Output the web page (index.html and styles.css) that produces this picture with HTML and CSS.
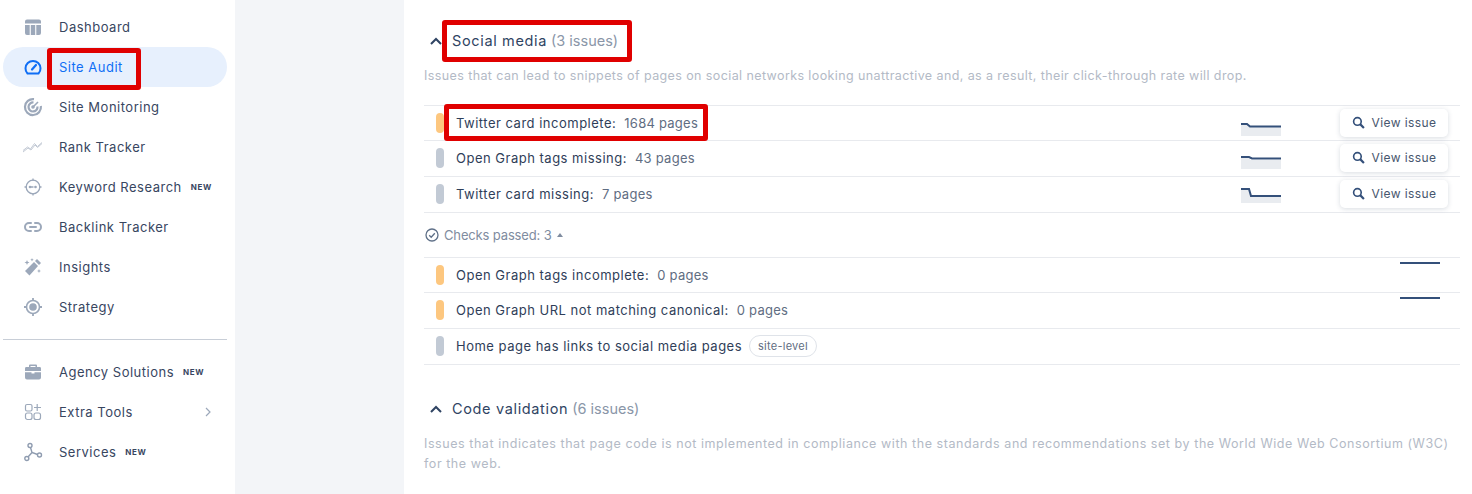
FILE: index.html
```html
<!DOCTYPE html>
<html lang="en">
<head>
<meta charset="utf-8">
<title>Site Audit</title>
<link rel="stylesheet" href="styles.css">
</head>
<body>
<div class="app">
  <nav class="sidebar">
    <a class="nav-item"><svg class="ico" viewBox="0 0 18 18"><path fill="#9ca8ba" d="M1 3.500A2 2 0 0 1 3 1.500h12a2 2 0 0 1 2 2V5.500H1zM1 7h4.700v10H3a2 2 0 0 1-2-2zM6.800 7h4.400v10H6.800zM12.300 7H17v8a2 2 0 0 1-2 2h-2.700z"/></svg><span>Dashboard</span></a>
    <a class="nav-item active"><svg class="ico" viewBox="0 0 18 18"><path fill="none" stroke="#0f6ef5" stroke-width="2" stroke-linejoin="round" d="M3.500 15.500A7.500 7.500 0 1 1 14.500 15.500z"/><path fill="none" stroke="#0f6ef5" stroke-width="2.200" stroke-linecap="round" d="M8 11.500l4-4.500"/></svg><span>Site Audit</span></a>
    <a class="nav-item"><svg class="ico" viewBox="0 0 18 18"><g fill="none" stroke="#9ca8ba"><path stroke-width="2.200" d="M10 1.100A8 8 0 1 0 16.900 8"/><path stroke-width="2.200" d="M9.500 4.500a4.500 4.500 0 1 0 4 4"/><circle cx="9" cy="9" r="1" stroke-width="1.600"/><path stroke-width="1.600" d="M9 9l5-5"/></g></svg><span>Site Monitoring</span></a>
    <a class="nav-item"><svg class="ico" viewBox="0 0 18 18"><path fill="none" stroke="#c3cad5" stroke-width="1" d="M-1 14l5-4 3 2 4-5 2.500 2.500L18 5.500M-1 12.500l4.500-3.500 3 2 4-5.500 3 3 4.500-4"/></svg><span>Rank Tracker</span></a>
    <a class="nav-item"><svg class="ico" viewBox="0 0 18 18"><circle cx="9" cy="9" r="6.800" fill="none" stroke="#9ca8ba" stroke-width="1.300"/><path stroke="#9ca8ba" stroke-width="1.300" d="M9 .5v2.500M9 15v2.500M.5 9H3M15 9h2.500M5.500 9h4"/><circle cx="6" cy="9" r="1.300" fill="#9ca8ba"/><circle cx="11.500" cy="9" r="1.300" fill="#9ca8ba"/></svg><span>Keyword Research</span><b class="new">NEW</b></a>
    <a class="nav-item"><svg class="ico" viewBox="0 0 18 18"><path fill="none" stroke="#9ca8ba" stroke-width="2" stroke-linecap="round" d="M7 5H5a4 4 0 0 0 0 8h2M11 5h2a4 4 0 0 1 0 8h-2M6 9h6"/></svg><span>Backlink Tracker</span></a>
    <a class="nav-item"><svg class="ico" viewBox="0 0 18 18"><path fill="#9ca8ba" d="M13 1l4 4-2 2-4-4zM10 4l4 4-8.500 9.500L1 13zM3 2l.7 1.800L5.500 4.500l-1.800.7L3 7l-.7-1.800L.5 4.500l1.800-.7zM15 11l.6 1.400 1.400.6-1.400.6L15 15l-.6-1.400L13 13l1.400-.6zM8 0l.5 1.200L9.700 1.700 8.500 2.200 8 3.400l-.5-1.200-1.200-.5 1.200-.5z"/></svg><span>Insights</span></a>
    <a class="nav-item"><svg class="ico" viewBox="0 0 18 18"><circle cx="9" cy="9" r="6.500" fill="none" stroke="#9ca8ba" stroke-width="1.600"/><circle cx="9" cy="9" r="3.800" fill="#9ca8ba"/><path stroke="#9ca8ba" stroke-width="1.800" d="M9 0v3M9 15v3M0 9h3M15 9h3"/></svg><span>Strategy</span></a>
    <hr class="divider">
    <a class="nav-item"><svg class="ico" viewBox="0 0 18 18"><path fill="#9ca8ba" d="M6 1.500h6a1 1 0 0 1 1 1V4h3a1.500 1.500 0 0 1 1 1.500V8H1V5.500A1.500 1.500 0 0 1 2 4h3V2.500a1 1 0 0 1 1-1zM6.500 3v1h5V3zM1 9.200h6.500v1.300h3V9.200H17v5.300a2 2 0 0 1-2 2H3a2 2 0 0 1-2-2z"/></svg><span>Agency Solutions</span><b class="new">NEW</b></a>
    <a class="nav-item"><svg class="ico" viewBox="0 0 18 18"><g fill="none" stroke="#9ca8ba" stroke-width="1.200"><rect x="1.500" y="1.500" width="6.500" height="6.500" rx="1.500"/><rect x="1.500" y="10" width="6.500" height="6.500" rx="2"/><rect x="10" y="10" width="6.500" height="6.500" rx="2"/><path d="M13.200 1v7M10 4.500h7"/></g></svg><span>Extra Tools</span><svg class="chev" viewBox="0 0 6 10"><path fill="none" stroke="#9ca8ba" stroke-width="1.200" d="M1 1l4 4-4 4"/></svg></a>
    <a class="nav-item"><svg class="ico" viewBox="0 0 18 18"><g fill="none" stroke="#8f9cb0" stroke-width="1.400"><circle cx="6" cy="2.500" r="2"/><circle cx="15.500" cy="12" r="2"/><circle cx="2.800" cy="15.500" r="2"/><path d="M6.500 4.500L8 9.500l5.500 2M8 9.500l-4 4.500"/></g></svg><span>Services</span><b class="new">NEW</b></a>
  </nav>
  <div class="gutter"></div>
  <main class="content">
    <section class="group first">
      <h2 class="title"><svg class="caret" viewBox="0 0 12 8"><path fill="none" stroke="#2f4463" stroke-width="2" d="M1 7l5-5 5 5"/></svg><span class="name">Social media</span> <span class="count">(3 issues)</span><i class="mark mark-title"></i></h2>
      <p class="desc">Issues that can lead to snippets of pages on social networks looking unattractive and, as a result, their click-through rate will drop.</p>
      <ul class="rows">
        <li class="row"><i class="pill amber"></i><span class="label">Twitter card incomplete:</span><span class="num">1684 pages</span><i class="mark mark-row"></i>
          <svg class="spark spark-a" viewBox="0 0 40 13"><path fill="#e9ecf0" d="M0 2h7l3 2h30v9H0z"/><path fill="none" stroke="#34507a" stroke-width="2" d="M0 1h6l3 2.500h31"/></svg>
          <button class="view"><svg viewBox="0 0 12 12"><circle cx="5" cy="5" r="3.500" fill="none" stroke="#34507a" stroke-width="1.500"/><path stroke="#34507a" stroke-width="2" d="M7.500 7.500L11 11"/></svg>View issue</button></li>
        <li class="row"><i class="pill grey"></i><span class="label">Open Graph tags missing:</span><span class="num">43 pages</span>
          <svg class="spark spark-b" viewBox="0 0 40 13"><path fill="#e9ecf0" d="M0 2h7l3 2h30v9H0z"/><path fill="none" stroke="#34507a" stroke-width="2" d="M0 1h8l3 1.500h29"/></svg>
          <button class="view"><svg viewBox="0 0 12 12"><circle cx="5" cy="5" r="3.500" fill="none" stroke="#34507a" stroke-width="1.500"/><path stroke="#34507a" stroke-width="2" d="M7.500 7.500L11 11"/></svg>View issue</button></li>
        <li class="row"><i class="pill grey"></i><span class="label">Twitter card missing:</span><span class="num">7 pages</span>
          <svg class="spark spark-c" viewBox="0 0 40 15"><path fill="#e9ecf0" d="M0 1h8l2 8h30v6H0z"/><path fill="none" stroke="#34507a" stroke-width="2" d="M0 1h8l2 7h30"/></svg>
          <button class="view"><svg viewBox="0 0 12 12"><circle cx="5" cy="5" r="3.500" fill="none" stroke="#34507a" stroke-width="1.500"/><path stroke="#34507a" stroke-width="2" d="M7.500 7.500L11 11"/></svg>View issue</button></li>
      </ul>
      <div class="passed"><svg viewBox="0 0 14 14"><circle cx="7" cy="7" r="6" fill="none" stroke="#5f7088" stroke-width="1.300"/><path fill="none" stroke="#5f7088" stroke-width="1.300" d="M4.200 7.200l2 2 3.600-4"/></svg>Checks passed: 3<svg class="up" viewBox="0 0 6 4"><path fill="#7f8ca0" d="M3 0l3 4H0z"/></svg></div>
      <ul class="rows">
        <li class="row"><i class="pill amber"></i><span class="label">Open Graph tags incomplete:</span><span class="num">0 pages</span><i class="flat"></i></li>
        <li class="row"><i class="pill amber"></i><span class="label">Open Graph URL not matching canonical:</span><span class="num">0 pages</span><i class="flat"></i></li>
        <li class="row"><i class="pill grey"></i><span class="label plain">Home page has links to social media pages</span><span class="tag">site-level</span></li>
      </ul>
    </section>
    <section class="group">
      <h2 class="title"><svg class="caret" viewBox="0 0 12 8"><path fill="none" stroke="#2f4463" stroke-width="2" d="M1 7l5-5 5 5"/></svg><span class="name">Code validation</span> <span class="count">(6 issues)</span></h2>
      <p class="desc desc-wide">Issues that indicates that page code is not implemented in compliance with the standards and recommendations set by the World Wide Web Consortium (W3C) for the web.</p>
    </section>
  </main>
</div>
<i class="mark mark-nav"></i>
</body>
</html>
```
FILE: styles.css
```css
* { box-sizing: border-box; }
html, body { margin: 0; padding: 0; height: 494px; overflow: hidden; background: #fff; }
body { font-family: Inter, "Noto Sans", sans-serif; color: #2b3a55; position: relative; }
.app { display: flex; height: 494px; }
.sidebar { width: 235px; flex: none; padding: 7px 8px 0 3px; }
.nav-item { display: flex; align-items: center; height: 40px; padding-left: 21px; border-radius: 20px; font-size: 13px; letter-spacing: .5px; color: #38465f; }
.nav-item.active { background: #e7f0fd; color: #0f6ef5; }
.ico { width: 18px; height: 18px; flex: none; margin-right: 17px; overflow: visible; }
.new { margin-left: 9px; font-size: 8px; font-weight: 700; letter-spacing: .6px; color: #38465f; }
.chev { width: 6px; height: 10px; margin-left: auto; margin-right: 16px; }
.divider { border: 0; border-top: 1px solid #c8ced7; margin: 12px 0; height: 0; }
.gutter { width: 169px; flex: none; background: #f3f5f8; }
.content { flex: 1; min-width: 0; padding: 0 12px 0 20px; }
.group.first { padding-top: 31px; }
.group + .group { padding-top: 34px; }
.title { position: relative; margin: 0; display: flex; align-items: center; height: 20px; font-size: 14.500px; font-weight: 400; line-height: 20px; }
.caret { width: 12px; height: 8px; margin: 0 10px 0 6px; flex: none; }
.name { color: #2f4463; letter-spacing: .65px; }
.count { margin-left: 4px; color: #8a96a8; letter-spacing: 0; }
.desc { margin: 15px 0 0; font-size: 12.500px; line-height: 20px; color: #b3bac6; letter-spacing: .4px; }
.desc-wide { letter-spacing: .56px; }
.first .desc { margin-bottom: 19px; }
.rows { list-style: none; margin: 0; padding: 0; border-top: 1px solid #e8eaee; }
.row { position: relative; display: flex; align-items: center; height: 36px; padding: 0 0 1px 12px; border-bottom: 1px solid #e8eaee; font-size: 13px; letter-spacing: .25px; }
.row:first-child { height: 35px; padding-bottom: 0; }
.pill { width: 8px; height: 20px; border-radius: 4px; flex: none; margin-right: 12px; }
.amber { background: #fdc77f; }
.grey { background: #c2cad5; }
.label { color: #2f3e59; letter-spacing: .5px; }
.num { margin-left: 8px; color: #5f6d82; }
.tag { margin-left: 7px; height: 22px; padding: 0 8px; border: 1px solid #dfe3e9; border-radius: 11px; font-size: 11px; line-height: 20px; color: #5f6d82; }
.spark { position: absolute; left: 817px; width: 40px; }
.spark-a { top: 17px; height: 13px; }
.spark-b { top: 15px; height: 13px; }
.spark-c { top: 11px; height: 15px; }
.view { position: absolute; right: 12px; top: 3px; width: 108px; height: 28px; padding: 0 0 1px; display: flex; align-items: center; justify-content: center; gap: 7px; border: 0; border-radius: 5px; background: #fff; box-shadow: 0 1px 5px rgba(40, 60, 90, .18); font: 12px Inter, "Noto Sans", sans-serif; letter-spacing: .4px; color: #47566e; }
.view svg { width: 13px; height: 13px; flex: none; }
.passed { display: flex; align-items: center; height: 44px; font-size: 13px; color: #7f8ca0; letter-spacing: -.15px; }
.passed svg:first-child { width: 14px; height: 14px; margin: 0 5px 0 1px; }
.up { width: 6px; height: 4px; margin-left: 5px; }
.flat { position: absolute; left: 976px; top: 4px; width: 40px; height: 2px; background: #34507a; }
.mark { position: absolute; display: block; border: 5px solid #e00000; border-radius: 3px; pointer-events: none; }
.mark-title { left: 18px; top: -11px; width: 190px; height: 42px; }
.mark-row { left: 20px; top: -2px; width: 264px; height: 37px; }
.mark-nav { left: 47px; top: 48px; width: 94px; height: 42px; }
```
